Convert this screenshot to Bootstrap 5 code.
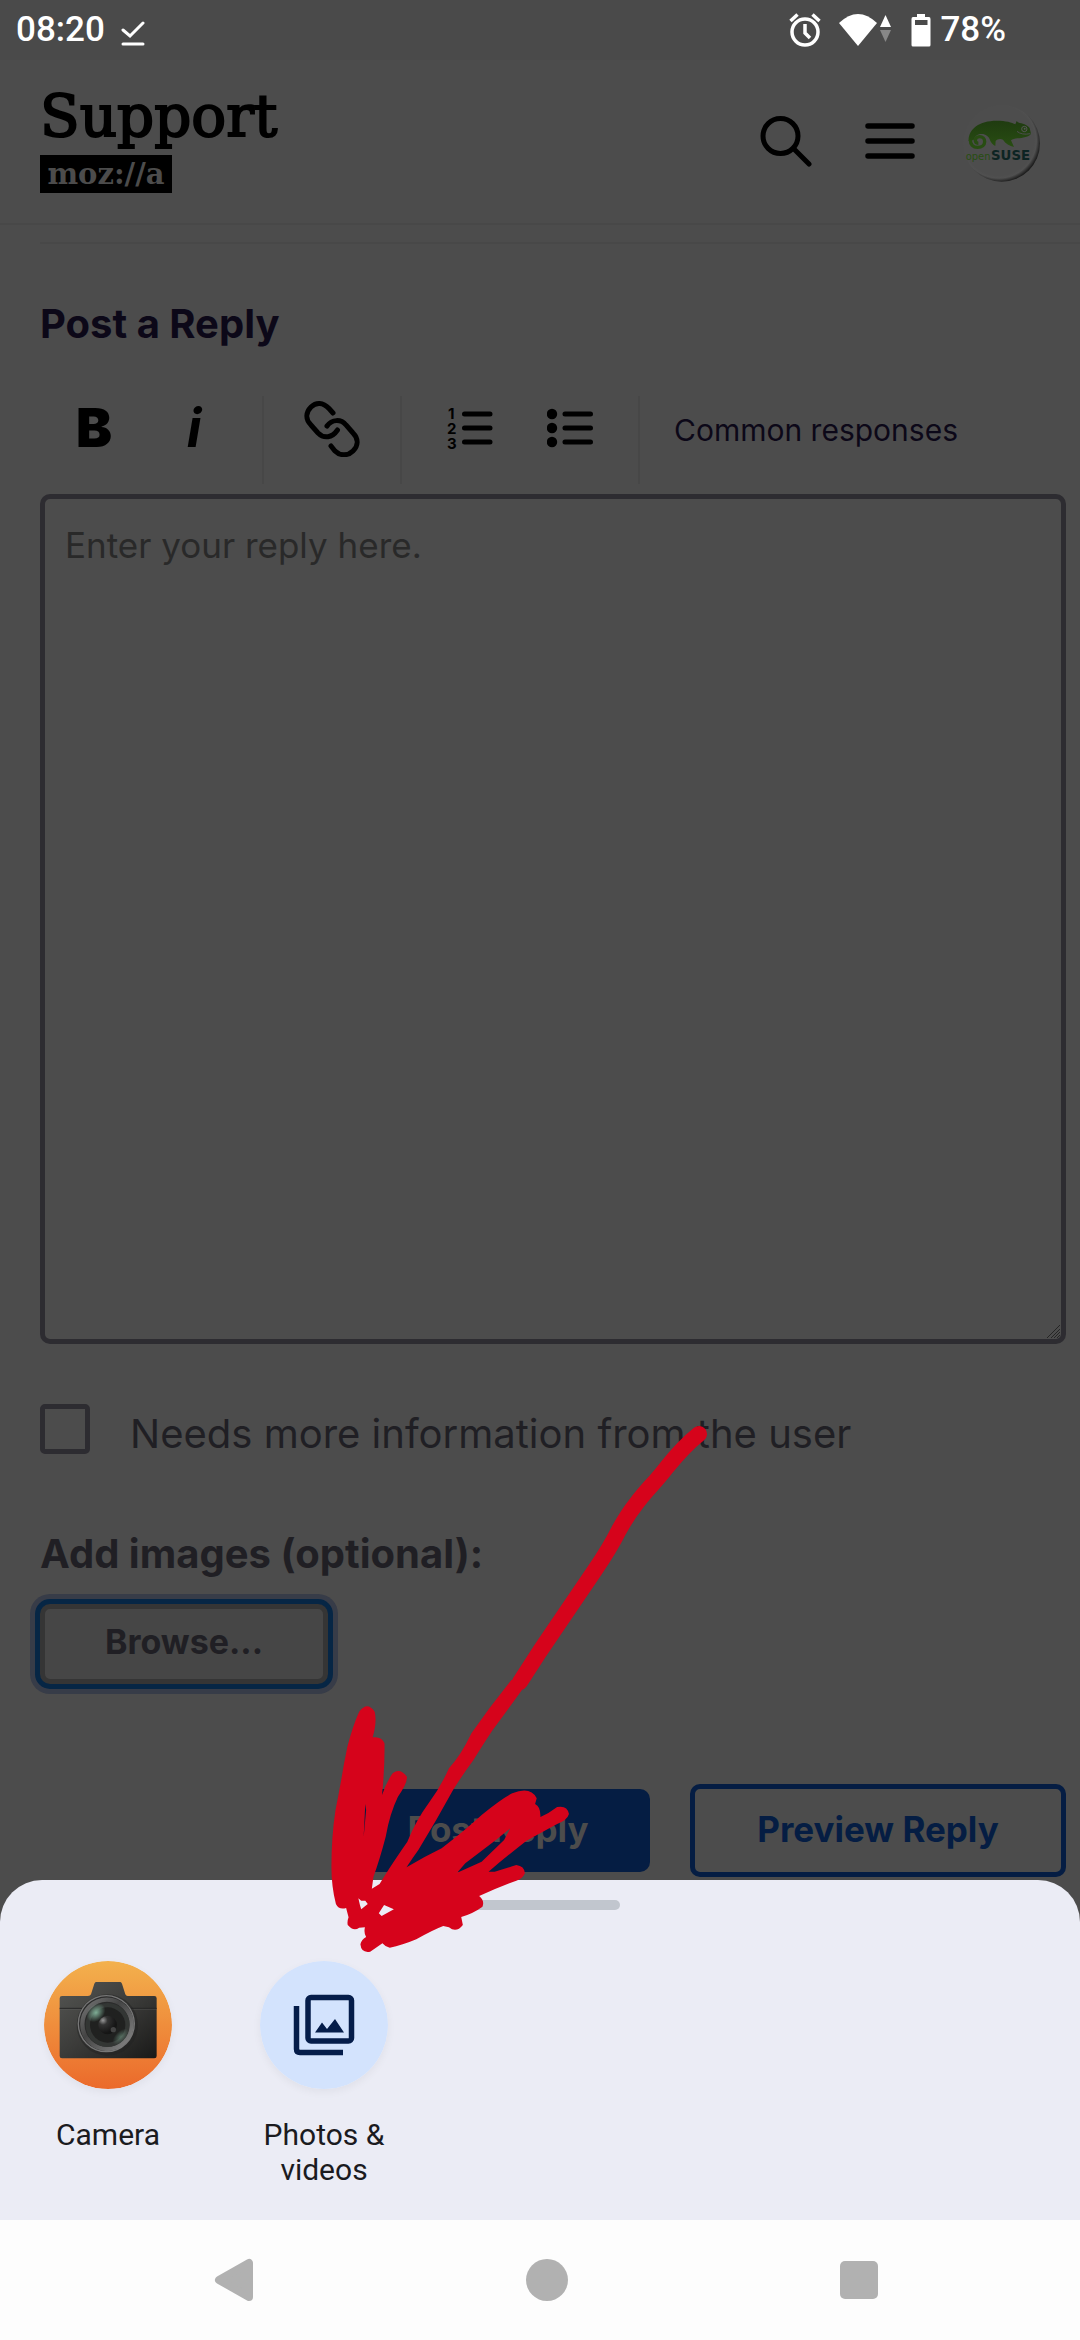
<!DOCTYPE html>
<html lang="en">
<head>
<meta charset="utf-8">
<meta name="viewport" content="width=device-width, initial-scale=1">
<title>Post a Reply | Mozilla Support</title>
<link href="https://cdn.jsdelivr.net/npm/bootstrap@5.3.0/dist/css/bootstrap.min.css" rel="stylesheet">
<style>
  body { background: #4c4c4c; font-family: Inter, "Liberation Sans", sans-serif; color: #201f24; }
  svg { display: block; flex: none; }
  .screen { min-height: 100vh; overflow: hidden; }
  .statusbar { background: #4a4a4a; height: 60px; padding: 0 74px 0 16px; font: 500 35px/40px Roboto, sans-serif; color: #fff; }
  .saved { margin: 8px 0 0 16px; }
  .signal { margin-left: 18px; gap: 3px; }
  .battery { margin: 0 9px 0 20px; }
  .site-head { height: 165px; padding: 0 40px; border-bottom: 2px solid #484848; }
  .brand { color: #000; font-family: "DejaVu Serif", serif; text-decoration: none; padding-bottom: 5px; }
  .brand-name { font-size: 58px; line-height: 62px; -webkit-text-stroke: 2px #000; }
  .brand-tag { background: #000; color: #4c4c4c; font-size: 29px; font-weight: 700; line-height: 38px; width: 132px; text-align: center; margin-top: 8px; }
  .icon-btn { background: none; border: 0; padding: 0; color: #000; }
  .menu-btn { margin: 0 40px 0 48px; }
  .rule { border-top: 2px solid #484848; margin: 17px 0 0 40px; }
  .reply { padding: 0 14px 0 40px; }
  .reply h1 { font-size: 40px; line-height: 48px; font-weight: 700; color: #0c0818; margin: 56px 0 0; }
  .tools { height: 88px; margin: 48px 0 10px; }
  .tool-set { padding: 0 18px 25px 18px; border-right: 2px solid #474747; }
  .tool-set:first-child { padding-left: 4px; }
  .tool-set .icon-btn { width: 100px; height: 62px; font-size: 54px; line-height: 62px; }
  .glyph-b { font-weight: 900; }
  .glyph-i { font-weight: 700; font-style: italic; }
  .common { font-size: 30px; line-height: 40px; color: #0c0818; text-decoration: none; margin: 14px 0 0 34px; }
  .reply-box { width: 100%; height: 850px; background: #4c4c4c; border: 5px solid #2d2c31; border-radius: 10px; padding: 25px 20px; font-size: 35px; line-height: 42px; resize: none; display: block; }
  .reply-box::placeholder { color: #292929; opacity: 1; }
  .grip { right: 5px; bottom: 5px; pointer-events: none; }
  .more-info { margin-top: 60px; font-size: 40px; line-height: 60px; }
  .more-info input { width: 50px; height: 50px; border: 5px solid #2d2c31; border-radius: 5px; background: #4c4c4c; margin: 0 40px 0 0; appearance: none; flex: none; }
  .files { font-size: 40px; line-height: 48px; font-weight: 700; margin-top: 66px; }
  .act { font-size: 35px; line-height: 40px; font-weight: 700; border-radius: 10px; padding: 0 0 4px; border: 0; }
  .browse { width: 288px; height: 80px; margin-top: 26px; font-size: 34px; color: #201f24; background: #464646; border: 5px solid #353535; box-shadow: 0 0 0 5px #062645, 0 0 0 10px #373c48; }
  .actions { margin-top: 100px; gap: 40px; height: 93px; }
  .post { width: 304px; height: 83px; background: #051d43; color: #4c4c4c; }
  .preview { width: 376px; height: 93px; background: none; border: 5px solid #051d43; color: #051d43; }
  .sheet { margin-top: 3px; background: #ebecf5; border-radius: 42px 42px 0 0; height: 340px; padding-top: 20px; }
  .handle { width: 160px; height: 10px; border-radius: 5px; background: #c1c6ce; }
  .source { width: 20%; border: 0; background: none; padding: 0; font: 400 30px/35px Roboto, sans-serif; color: #1b1b1f; margin-top: 51px; }
  .source span { margin-top: 28px; width: 140px; }
  .source svg { border-radius: 50%; box-shadow: 0 3px 8px rgba(0,0,0,.05); }
  .navbuttons { height: 120px; background: #fdfdfd; padding: 0 66px 0 78px; }
  .ink { left: 0; top: -470px; pointer-events: none; }
</style>
</head>
<body>
<div class="screen d-flex flex-column">
  <div class="statusbar d-flex align-items-center">
    <span>08:20</span>
    <svg class="saved" width="24" height="26" viewBox="0 0 24 26" fill="none" stroke="#fff" stroke-width="3" stroke-linecap="round"><path d="M2 9l7 6L22 2M2 23h20"/></svg>
    <svg class="ms-auto" width="32" height="34" viewBox="0 0 32 34" fill="none" stroke="#fff" stroke-width="3.5"><circle cx="16" cy="19" r="13"/><path d="M16 11v9l5 5M1.500 8l7-6.500M30.500 8l-7-6.500"/></svg>
    <div class="signal d-flex">
      <svg width="38" height="32" viewBox="0 0 38 32"><path fill="#fff" d="M0 9Q19-9 38 9L19 32z"/></svg>
      <svg width="11" height="32" viewBox="0 0 11 32"><path fill="#fff" d="M5.500 1L11 13H0z"/><path fill="#888" d="M0 16h11L5.500 28z"/></svg>
    </div>
    <svg class="battery" width="20" height="34" viewBox="0 0 20 34"><path fill="#fff" fill-rule="evenodd" d="M6 1h8v3h4q1.500 0 1.500 2v26q0 1.500-1.500 1.500H2q-1.500 0-1.500-1.500V6Q.500 4 2 4h4zM4 7v5h12.500V7z"/></svg>
    <span>78%</span>
  </div>

  <header class="site-head d-flex align-items-center">
    <a class="brand me-auto" href="#"><div class="brand-name">Support</div><div class="brand-tag">moz://a</div></a>
    <button class="icon-btn" aria-label="Search"><svg width="52" height="52" viewBox="0 0 52 52" fill="none" stroke="#000" stroke-width="5"><circle cx="20.500" cy="20" r="17.500"/><path stroke-linecap="round" d="M34 33l15 15"/></svg></button>
    <button class="icon-btn menu-btn" aria-label="Menu"><svg width="60" height="40" viewBox="0 0 60 40" stroke="#000" stroke-width="5.500" stroke-linecap="round"><path d="M8 4h44M8 19h44M8 34h44"/></svg></button>
    <a href="#" aria-label="Profile">
      <svg width="80" height="82" viewBox="0 0 80 82">
        <defs>
          <radialGradient id="rim" gradientUnits="userSpaceOnUse" cx="146" cy="148" r="126"><stop offset=".84" stop-color="#4d4d4d"/><stop offset=".9" stop-color="#505050"/><stop offset="1" stop-color="#1c1c1c"/></radialGradient>
          <linearGradient id="skin" x1="0" y1="0" x2="0" y2="1"><stop offset="0" stop-color="#1f3b10"/><stop offset="1" stop-color="#284d12"/></linearGradient>
        </defs>
        <g transform="scale(.3333) translate(-30 -30)">
          <circle cx="155" cy="157" r="115" fill="url(#rim)"/>
          <path fill="url(#skin)" d="M56 150C54 116 86 89 140 89c28 0 46 5 56 11l4-10q3 5 9 6c14 2 26 9 30 15l4 17c-4 9-26 13-40 14-8 0-16 3-20 6l9 20c-13-3-26-10-33-22-9-4-18-1-22 4l-1 15c-7-2-14-10-17-20-3-8-12-16-24-16-14 0-21 8-24 18z"/>
          <path fill="none" stroke="#284d12" stroke-width="10" d="M61 146c0 14 8 23 22 23 13 0 21-8 21-17s-7-15-15-15-13 5-13 11 4 9 9 9"/>
          <circle cx="223" cy="114" r="8" fill="none" stroke="#555" stroke-width="3"/><circle cx="224" cy="113" r="3" fill="#555"/>
          <path fill="none" stroke="#4d4d4d" stroke-width="3" d="M201 121q14 12 40 7"/>
          <text x="47" y="206" font-family="DejaVu Sans" font-size="30" fill="#284d12">open</text>
          <text x="123" y="206" font-family="DejaVu Sans" font-size="40" font-weight="700" fill="#0d2423">SUSE</text>
        </g>
      </svg>
    </a>
  </header>
  <div class="rule"></div>

  <main class="reply">
    <h1>Post a Reply</h1>
    <div class="tools d-flex">
      <div class="tool-set d-flex align-items-center">
        <button class="icon-btn glyph-b" aria-label="Bold">B</button>
        <button class="icon-btn glyph-i" aria-label="Italic">i</button>
      </div>
      <div class="tool-set d-flex align-items-center">
        <button class="icon-btn" aria-label="Link"><svg class="mx-auto" width="60" height="58" viewBox="0 0 60 58" fill="none" stroke="#000" stroke-width="5" stroke-linecap="round"><path d="M31 14l-4-4.500C21 3 14 3 9 8S3 20 9 26l7 8c6 6 14 5 19.500-3M25 27c5-7 14-7 19-1l7 8c6 6 5 13 0 18s-13 5-18 0l-4-5"/></svg></button>
      </div>
      <div class="tool-set d-flex align-items-center">
        <button class="icon-btn" aria-label="Numbered list"><svg class="mx-auto" width="46" height="44" viewBox="0 0 46 44"><g font-family="Inter" font-size="15" font-weight="700"><text x="1" y="13">1</text><text x="0" y="28">2</text><text x="0" y="43">3</text></g><path stroke="#000" stroke-width="5" stroke-linecap="round" d="M17.500 8H43M17.500 22H43M17.500 36H43"/></svg></button>
        <button class="icon-btn" aria-label="Bulleted list"><svg class="mx-auto" width="46" height="44" viewBox="0 0 46 44"><circle cx="5" cy="8" r="5.200"/><circle cx="5" cy="22" r="5.200"/><circle cx="5" cy="36" r="5.200"/><path stroke="#000" stroke-width="5" stroke-linecap="round" d="M18 8H43.500M18 22H43.500M18 36H43.500"/></svg></button>
      </div>
      <a class="common" href="#">Common responses</a>
    </div>
    <div class="position-relative">
      <textarea class="reply-box" placeholder="Enter your reply here." aria-label="Reply"></textarea>
      <svg class="grip position-absolute" width="14" height="14" viewBox="0 0 14 14" stroke="#252525" stroke-width="1"><path d="M0 13L13 0M4 13l9-9M7 13l6-6M10 13l3-3"/></svg>
    </div>
    <div class="more-info d-flex"><input type="checkbox" id="more"><label for="more">Needs more information from the user</label></div>
    <label class="files d-block" for="browse">Add images (optional):</label>
    <button id="browse" class="act browse d-block">Browse...</button>
    <div class="actions d-flex justify-content-end align-items-center"><button class="act post">Post Reply</button><button class="act preview">Preview Reply</button></div>
  </main>

  <section class="sheet position-relative">
    <div class="handle mx-auto"></div>
    <div class="d-flex align-items-start">
      <button class="source d-flex flex-column align-items-center">
        <svg width="128" height="128" viewBox="0 0 128 128">
          <defs>
            <linearGradient id="sun" x1="0" y1="0" x2="0" y2="1"><stop offset="0" stop-color="#f3b14d"/><stop offset="1" stop-color="#eb6a2b"/></linearGradient>
            <linearGradient id="body" x1="0" y1="0" x2="1" y2="1"><stop offset="0" stop-color="#555653"/><stop offset=".5" stop-color="#3b3b39"/><stop offset="1" stop-color="#191918"/></linearGradient>
            <linearGradient id="ring" x1="0" y1="0" x2="1" y2="1"><stop offset="0" stop-color="#777"/><stop offset=".4" stop-color="#444"/><stop offset="1" stop-color="#888"/></linearGradient>
            <radialGradient id="pupil" cx=".25" cy=".25" r=".7"><stop offset="0" stop-color="#999"/><stop offset=".35" stop-color="#333"/><stop offset="1" stop-color="#151515"/></radialGradient>
            <radialGradient id="glint"><stop offset="0" stop-color="#7fae96"/><stop offset="1" stop-color="#7fae96" stop-opacity="0"/></radialGradient>
          </defs>
          <circle cx="64" cy="64" r="64" fill="url(#sun)"/>
          <g transform="scale(.3333) translate(-12 -18)">
            <path fill="url(#body)" d="M168 81h73q3 0 5 5l10 32q2 5 7 5h80q7 0 7 7v173q0 7-7 7H66q-7 0-7-7V130q0-7 7-7h78q7 0 9-5l10-32q2-5 5-5z"/>
            <path stroke="#252525" stroke-width="3" d="M59 160h291"/><path stroke="#666" stroke-width="1" d="M59 163h291"/>
            <circle cx="202" cy="210" r="92" fill="#222" opacity=".45"/>
            <circle cx="199" cy="206" r="86" fill="#777"/>
            <circle cx="199" cy="206" r="82" fill="#2b2b2b"/>
            <circle cx="201" cy="208" r="74" fill="none" stroke="url(#ring)" stroke-width="13"/>
            <circle cx="203" cy="210" r="66" fill="#333634"/>
            <circle cx="203" cy="210" r="53" fill="#202120"/>
            <circle cx="203" cy="210" r="28" fill="url(#pupil)"/>
            <circle cx="220" cy="224" r="8" fill="#444"/>
            <ellipse cx="168" cy="173" rx="32" ry="24" fill="url(#glint)" transform="rotate(-45 168 173)"/>
            <ellipse cx="242" cy="245" rx="30" ry="16" fill="url(#glint)" opacity=".5" transform="rotate(-45 242 245)"/>
          </g>
        </svg>
        <span>Camera</span>
      </button>
      <button class="source d-flex flex-column align-items-center">
        <svg width="128" height="128" viewBox="0 0 128 128"><circle cx="64" cy="64" r="64" fill="#d3e3fd"/><g fill="none" stroke="#051d4a" stroke-width="5.500"><rect x="48" y="36.500" width="43.500" height="43.500" rx="3"/><path d="M36.500 45v43q0 3.500 3.500 3.500h43"/></g><path fill="#051d4a" d="M55 71.500l7-10 5 6.500 8-10 9 13.500z"/></svg>
        <span>Photos &amp; videos</span>
      </button>
    </div>
    <!-- hand-drawn arrow pointing at "Photos & videos" -->
    <svg class="ink position-absolute" width="720" height="560" viewBox="0 1410 720 560">
      <path fill="none" stroke="#d6031b" stroke-width="16" stroke-linecap="round" stroke-linejoin="round" d="M699 1434Q684 1446 667 1467C654 1484 648 1488 636 1504Q628 1514 619 1530Q610 1548 595 1570L540 1651L520 1682"/>
      <path fill="#d6031b" fill-rule="evenodd" transform="translate(0 1680) scale(.40816 .33333)" d="M880 95Q900 62 918 95Q924 125 913 172Q935 168 942 190Q943 260 936 345Q945 310 962 280Q980 262 997 290Q998 310 975 350Q955 400 945 470Q930 540 915 590L911 626L930 612Q950 570 998 485Q1020 420 1050 370Q1080 320 1100 265Q1130 225 1155 160Q1200 80 1253 0L1296 0Q1250 80 1207 150Q1180 200 1160 240Q1130 290 1110 330Q1070 420 1025 510Q1010 535 996 562Q1040 530 1082 505Q1140 450 1180 405Q1230 355 1255 340Q1300 318 1315 355L1311 372Q1325 380 1324 411Q1345 400 1365 381Q1390 375 1394 402Q1390 420 1365 432Q1320 462 1290 482Q1240 530 1197 575L1212 575Q1240 565 1265 555Q1285 558 1286 580Q1280 597 1265 602Q1220 622 1174 648Q1188 662 1182 680Q1160 700 1130 711L1134 735Q1118 760 1100 742L1086 738Q1060 750 1020 778Q985 796 955 803Q943 800 937 790L907 815Q885 820 883 793Q885 780 897 771Q891 760 894 742L880 743Q866 755 852 735Q850 725 854 712L848 684Q830 690 823 672Q812 620 812 560Q812 470 822 390Q832 330 843 250Q848 220 851 200Q865 135 880 95ZM878 655L885 662 895 662 901 672 885 688 882 676ZM941 675L965 688 935 708 928 700ZM895 372L897 390 891 470ZM1250 445L1235 480 1180 545 1120 578 1140 550 1215 480Z"/>
    </svg>
  </section>

  <nav class="navbuttons d-flex" aria-label="System">
    <button class="icon-btn flex-fill" aria-label="Back"><svg class="mx-auto" width="40" height="44" viewBox="0 0 40 44"><path fill="#b1b1b1" stroke="#b1b1b1" stroke-width="8" stroke-linejoin="round" d="M35 5v34L5 22z"/></svg></button>
    <button class="icon-btn flex-fill" aria-label="Home"><svg class="mx-auto" width="42" height="42" viewBox="0 0 42 42"><circle cx="21" cy="21" r="21" fill="#b1b1b1"/></svg></button>
    <button class="icon-btn flex-fill" aria-label="Recent apps"><svg class="mx-auto" width="38" height="38" viewBox="0 0 38 38"><rect width="38" height="38" rx="5" fill="#b1b1b1"/></svg></button>
  </nav>
</div>
<script src="https://cdn.jsdelivr.net/npm/bootstrap@5.3.0/dist/js/bootstrap.bundle.min.js"></script>
</body>
</html>
